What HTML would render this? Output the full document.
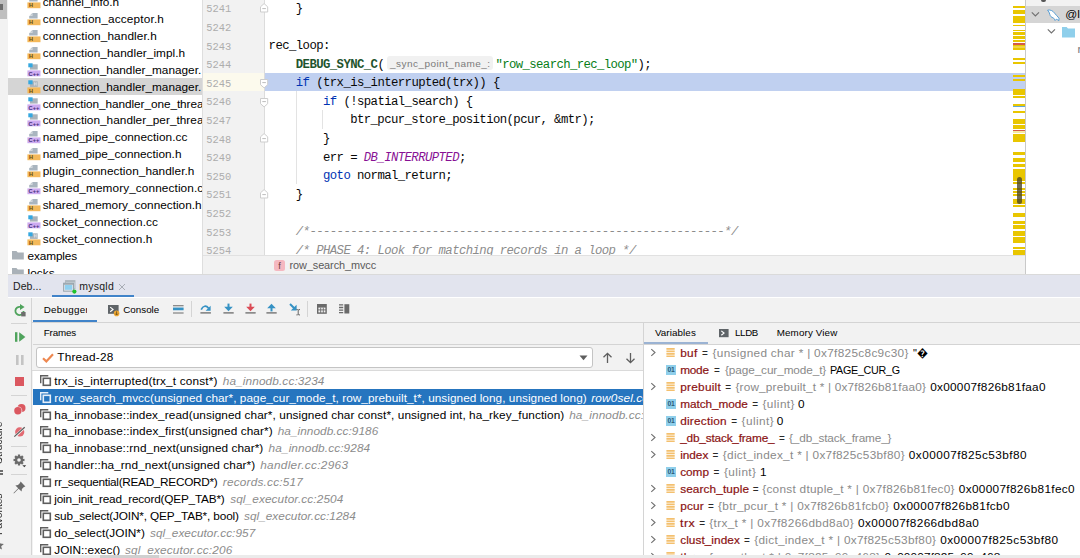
<!DOCTYPE html>
<html><head><meta charset="utf-8"><title>CLion debugger</title>
<style>
*{box-sizing:border-box;margin:0;padding:0}
html,body{width:1080px;height:558px;overflow:hidden;background:#fff}
body{position:relative;font-family:"Liberation Sans",sans-serif;font-size:11.8px;color:#000}
.a{position:absolute}
.t{position:absolute;white-space:pre;line-height:17px;height:17px}
.code{font-family:"Liberation Mono",monospace;font-size:12.3px;letter-spacing:-0.581px;white-space:pre;position:absolute;line-height:18.6px;height:18.6px;left:268.6px;color:#080808}
.ln{font-family:"Liberation Mono",monospace;font-size:10.4px;position:absolute;left:206.2px;line-height:18.6px;height:18.6px;color:#adadad}
.kw{color:#0033b3}.st{color:#067d17}.cm{color:#8c8c8c;font-style:italic}.mc{color:#1f542e;font-weight:bold}.cn{color:#871094;font-style:italic}
</style></head>
<body>
<div class="a" style="left:0;top:0;width:7.5px;height:558px;background:#f2f2f2"></div>
<div class="a" style="left:0;top:0;width:7px;height:19px;background:#bfbfbf"></div>
<div class="a" style="left:0;top:4.3px;width:3.2px;height:5.4px;background:#6e6e6e"></div>
<div class="a" style="left:7.5px;top:0;width:195px;height:273.8px;background:#fff;overflow:hidden">
<svg class="a" style="left:19.0px;top:-5.02px" width="14" height="14" viewBox="0 0 14 14"><path d="M5.3 1H10.6V6.5H2.2V4.1H5.3Z" fill="#a9b5bf"/><path d="M2.4 3.8L5 1.2V3.8Z" fill="#c5cdd3"/><path d="M0.4 7.4H13.5V13.2H0.4Z" fill="#f4b95a"/><text x="2" y="12.4" font-family="Liberation Sans,sans-serif" font-weight="bold" font-size="5.6" fill="#5e4a10">H</text></svg>
<div class="t" style="left:35.2px;top:-6.02px;letter-spacing:-0.019px;">channel_info.h</div>
<svg class="a" style="left:19.0px;top:11.90px" width="14" height="14" viewBox="0 0 14 14"><path d="M5.3 1H10.6V6.5H2.2V4.1H5.3Z" fill="#a9b5bf"/><path d="M2.4 3.8L5 1.2V3.8Z" fill="#c5cdd3"/><path d="M0.4 7.4H13.5V13.2H0.4Z" fill="#f4b95a"/><text x="2" y="12.4" font-family="Liberation Sans,sans-serif" font-weight="bold" font-size="5.6" fill="#5e4a10">H</text></svg>
<div class="t" style="left:35.2px;top:10.90px;letter-spacing:0.157px;">connection_acceptor.h</div>
<svg class="a" style="left:19.0px;top:28.82px" width="14" height="14" viewBox="0 0 14 14"><path d="M5.3 1H10.6V6.5H2.2V4.1H5.3Z" fill="#a9b5bf"/><path d="M2.4 3.8L5 1.2V3.8Z" fill="#c5cdd3"/><path d="M0.4 7.4H13.5V13.2H0.4Z" fill="#f4b95a"/><text x="2" y="12.4" font-family="Liberation Sans,sans-serif" font-weight="bold" font-size="5.6" fill="#5e4a10">H</text></svg>
<div class="t" style="left:35.2px;top:27.82px;letter-spacing:0.101px;">connection_handler.h</div>
<svg class="a" style="left:19.0px;top:45.74px" width="14" height="14" viewBox="0 0 14 14"><path d="M5.3 1H10.6V6.5H2.2V4.1H5.3Z" fill="#a9b5bf"/><path d="M2.4 3.8L5 1.2V3.8Z" fill="#c5cdd3"/><path d="M0.4 7.4H13.5V13.2H0.4Z" fill="#f4b95a"/><text x="2" y="12.4" font-family="Liberation Sans,sans-serif" font-weight="bold" font-size="5.6" fill="#5e4a10">H</text></svg>
<div class="t" style="left:35.2px;top:44.74px;letter-spacing:0.062px;">connection_handler_impl.h</div>
<svg class="a" style="left:19.0px;top:62.66px" width="14" height="14" viewBox="0 0 14 14"><path d="M2.9 1.3H10.7V6.6H2.9Z" fill="#aab3ba"/><path d="M1.3 0.3H5.6V4.3H1.3Z" fill="#35a8e0"/><path d="M0.4 7.4H13.5V13.3H0.4Z" fill="#cdaaf0"/><text x="1.6" y="12.6" font-family="Liberation Sans,sans-serif" font-weight="bold" font-size="5.4" fill="#43307a" textLength="10.6" lengthAdjust="spacingAndGlyphs">C++</text></svg>
<div class="t" style="left:35.2px;top:61.66px;letter-spacing:-0.009px;">connection_handler_manager.</div>
<div class="a" style="left:0;top:78.12px;width:195px;height:16.62px;background:#d5d5d5"></div>
<svg class="a" style="left:19.0px;top:79.58px" width="14" height="14" viewBox="0 0 14 14"><path d="M2.9 1.3H10.7V6.9H2.9Z" fill="#aab3ba"/><path d="M7.4 2.2V5.6M9.2 2.2V5.6M7.4 3.9H9.2" stroke="#e0e4e8" stroke-width="0.8" fill="none"/><path d="M1.3 0.3H5.6V4.3H1.3Z" fill="#35a8e0"/><path d="M0.4 7.4H13.5V13.3H0.4Z" fill="#f4b95a"/><text x="2" y="12.7" font-family="Liberation Sans,sans-serif" font-weight="bold" font-size="5.6" fill="#5e4a10">H</text></svg>
<div class="t" style="left:35.2px;top:78.58px;letter-spacing:-0.009px;">connection_handler_manager.</div>
<svg class="a" style="left:19.0px;top:96.50px" width="14" height="14" viewBox="0 0 14 14"><path d="M2.9 1.3H10.7V6.6H2.9Z" fill="#aab3ba"/><path d="M1.3 0.3H5.6V4.3H1.3Z" fill="#35a8e0"/><path d="M0.4 7.4H13.5V13.3H0.4Z" fill="#cdaaf0"/><text x="1.6" y="12.6" font-family="Liberation Sans,sans-serif" font-weight="bold" font-size="5.4" fill="#43307a" textLength="10.6" lengthAdjust="spacingAndGlyphs">C++</text></svg>
<div class="t" style="left:35.2px;top:95.50px;letter-spacing:-0.069px;">connection_handler_one_threa</div>
<svg class="a" style="left:19.0px;top:113.42px" width="14" height="14" viewBox="0 0 14 14"><path d="M2.9 1.3H10.7V6.6H2.9Z" fill="#aab3ba"/><path d="M1.3 0.3H5.6V4.3H1.3Z" fill="#35a8e0"/><path d="M0.4 7.4H13.5V13.3H0.4Z" fill="#cdaaf0"/><text x="1.6" y="12.6" font-family="Liberation Sans,sans-serif" font-weight="bold" font-size="5.4" fill="#43307a" textLength="10.6" lengthAdjust="spacingAndGlyphs">C++</text></svg>
<div class="t" style="left:35.2px;top:112.42px;letter-spacing:0.028px;">connection_handler_per_threa</div>
<svg class="a" style="left:19.0px;top:130.34px" width="14" height="14" viewBox="0 0 14 14"><path d="M5.3 1H10.6V6.5H2.2V4.1H5.3Z" fill="#a9b5bf"/><path d="M2.4 3.8L5 1.2V3.8Z" fill="#c5cdd3"/><path d="M0.4 7.4H13.5V13.2H0.4Z" fill="#cdaaf0"/><text x="1.6" y="12.3" font-family="Liberation Sans,sans-serif" font-weight="bold" font-size="5.4" fill="#43307a" textLength="10.6" lengthAdjust="spacingAndGlyphs">C++</text></svg>
<div class="t" style="left:35.2px;top:129.34px;letter-spacing:0.046px;">named_pipe_connection.cc</div>
<svg class="a" style="left:19.0px;top:147.26px" width="14" height="14" viewBox="0 0 14 14"><path d="M5.3 1H10.6V6.5H2.2V4.1H5.3Z" fill="#a9b5bf"/><path d="M2.4 3.8L5 1.2V3.8Z" fill="#c5cdd3"/><path d="M0.4 7.4H13.5V13.2H0.4Z" fill="#f4b95a"/><text x="2" y="12.4" font-family="Liberation Sans,sans-serif" font-weight="bold" font-size="5.6" fill="#5e4a10">H</text></svg>
<div class="t" style="left:35.2px;top:146.26px;letter-spacing:0.018px;">named_pipe_connection.h</div>
<svg class="a" style="left:19.0px;top:164.18px" width="14" height="14" viewBox="0 0 14 14"><path d="M5.3 1H10.6V6.5H2.2V4.1H5.3Z" fill="#a9b5bf"/><path d="M2.4 3.8L5 1.2V3.8Z" fill="#c5cdd3"/><path d="M0.4 7.4H13.5V13.2H0.4Z" fill="#f4b95a"/><text x="2" y="12.4" font-family="Liberation Sans,sans-serif" font-weight="bold" font-size="5.6" fill="#5e4a10">H</text></svg>
<div class="t" style="left:35.2px;top:163.18px;letter-spacing:0.057px;">plugin_connection_handler.h</div>
<svg class="a" style="left:19.0px;top:181.10px" width="14" height="14" viewBox="0 0 14 14"><path d="M5.3 1H10.6V6.5H2.2V4.1H5.3Z" fill="#a9b5bf"/><path d="M2.4 3.8L5 1.2V3.8Z" fill="#c5cdd3"/><path d="M0.4 7.4H13.5V13.2H0.4Z" fill="#cdaaf0"/><text x="1.6" y="12.3" font-family="Liberation Sans,sans-serif" font-weight="bold" font-size="5.4" fill="#43307a" textLength="10.6" lengthAdjust="spacingAndGlyphs">C++</text></svg>
<div class="t" style="left:35.2px;top:180.10px;letter-spacing:0.099px;">shared_memory_connection.c</div>
<svg class="a" style="left:19.0px;top:198.02px" width="14" height="14" viewBox="0 0 14 14"><path d="M5.3 1H10.6V6.5H2.2V4.1H5.3Z" fill="#a9b5bf"/><path d="M2.4 3.8L5 1.2V3.8Z" fill="#c5cdd3"/><path d="M0.4 7.4H13.5V13.2H0.4Z" fill="#f4b95a"/><text x="2" y="12.4" font-family="Liberation Sans,sans-serif" font-weight="bold" font-size="5.6" fill="#5e4a10">H</text></svg>
<div class="t" style="left:35.2px;top:197.02px;letter-spacing:0.008px;">shared_memory_connection.h</div>
<svg class="a" style="left:19.0px;top:214.94px" width="14" height="14" viewBox="0 0 14 14"><path d="M2.9 1.3H10.7V6.6H2.9Z" fill="#aab3ba"/><path d="M1.3 0.3H5.6V4.3H1.3Z" fill="#35a8e0"/><path d="M0.4 7.4H13.5V13.3H0.4Z" fill="#cdaaf0"/><text x="1.6" y="12.6" font-family="Liberation Sans,sans-serif" font-weight="bold" font-size="5.4" fill="#43307a" textLength="10.6" lengthAdjust="spacingAndGlyphs">C++</text></svg>
<div class="t" style="left:35.2px;top:213.94px;letter-spacing:0.132px;">socket_connection.cc</div>
<svg class="a" style="left:19.0px;top:231.86px" width="14" height="14" viewBox="0 0 14 14"><path d="M2.9 1.3H10.7V6.9H2.9Z" fill="#aab3ba"/><path d="M7.4 2.2V5.6M9.2 2.2V5.6M7.4 3.9H9.2" stroke="#e0e4e8" stroke-width="0.8" fill="none"/><path d="M1.3 0.3H5.6V4.3H1.3Z" fill="#35a8e0"/><path d="M0.4 7.4H13.5V13.3H0.4Z" fill="#f4b95a"/><text x="2" y="12.7" font-family="Liberation Sans,sans-serif" font-weight="bold" font-size="5.6" fill="#5e4a10">H</text></svg>
<div class="t" style="left:35.2px;top:230.86px;letter-spacing:0.119px;">socket_connection.h</div>
<svg class="a" style="left:4.5px;top:250.98px" width="12" height="9" viewBox="0 0 12 9"><path d="M0 0H4.4L5.8 1.5H11.8V8.6H0Z" fill="#a9b1b8"/></svg>
<div class="t" style="left:20.1px;top:247.78px;letter-spacing:-0.129px;">examples</div>
<svg class="a" style="left:4.5px;top:267.90px" width="12" height="9" viewBox="0 0 12 9"><path d="M0 0H4.4L5.8 1.5H11.8V8.6H0Z" fill="#a9b1b8"/></svg>
<div class="t" style="left:20.1px;top:264.70px;letter-spacing:0.027px;">locks</div>
</div>
<div class="a" style="left:202px;top:0;width:1.3px;height:273.8px;background:#dedede"></div>
<div class="a" style="left:203.3px;top:0;width:61.2px;height:255.3px;background:#f2f2f2"></div>
<div class="a" style="left:264px;top:0;width:1px;height:255.3px;background:#dcdcdc"></div>
<div class="a" style="left:203.3px;top:72.80px;width:61.2px;height:18.3px;background:#fcfaed"></div>
<div class="a" style="left:264.5px;top:72.80px;width:760.5px;height:18.3px;background:#c0d0f0"></div>
<div class="a" style="left:0;top:0;width:1025px;height:255.3px;overflow:hidden">
<div class="a" style="left:295.5px;top:91.40px;width:1px;height:93.00px;background:#e3e3e3"></div>
<div class="a" style="left:322px;top:110.00px;width:1px;height:18.60px;background:#e3e3e3"></div>
<div class="ln" style="top:0.40px">5241</div>
<div class="code" style="top:-0.30px">    }</div>
<div class="ln" style="top:19.00px">5242</div>
<div class="ln" style="top:37.60px">5243</div>
<div class="code" style="top:36.90px">rec_loop:</div>
<div class="ln" style="top:56.20px">5244</div>
<div class="code" style="top:55.50px">    <span class="mc">DEBUG_SYNC_C</span>(</div>
<div class="ln" style="top:74.80px">5245</div>
<div class="code" style="top:74.10px">    <span class="kw">if</span> (trx_is_interrupted(trx)) {</div>
<div class="ln" style="top:93.40px">5246</div>
<div class="code" style="top:92.70px">        <span class="kw">if</span> (!spatial_search) {</div>
<div class="ln" style="top:112.00px">5247</div>
<div class="code" style="top:111.30px">            btr_pcur_store_position(pcur, &amp;mtr);</div>
<div class="ln" style="top:130.60px">5248</div>
<div class="code" style="top:129.90px">        }</div>
<div class="ln" style="top:149.20px">5249</div>
<div class="code" style="top:148.50px">        err = <span class="cn">DB_INTERRUPTED</span>;</div>
<div class="ln" style="top:167.80px">5250</div>
<div class="code" style="top:167.10px">        <span class="kw">goto</span> normal_return;</div>
<div class="ln" style="top:186.40px">5251</div>
<div class="code" style="top:185.70px">    }</div>
<div class="ln" style="top:205.00px">5252</div>
<div class="ln" style="top:223.60px">5253</div>
<div class="code" style="top:222.90px">    <span class="cm">/*-------------------------------------------------------------*/</span></div>
<div class="ln" style="top:242.20px">5254</div>
<div class="code" style="top:241.50px">    <span class="cm">/* PHASE 4: Look for matching records in a loop */</span></div>
<div class="a" style="left:386.6px;top:56.40px;width:106.6px;height:13.8px;border-radius:3px;background:#f1f1f1"></div>
<div class="t" style="left:390.4px;top:55.40px;letter-spacing:0.450px;transform:scaleX(1.0197);transform-origin:0 0;font-size:9.8px;color:#7a7a7a;">_sync_point_name_:</div>
<div class="code" style="left:495.6px;letter-spacing:-0.625px;top:55.50px"><span class="st">"row_search_rec_loop"</span>);</div>
<svg class="a" style="left:260.3px;top:2.80px" width="9" height="10" viewBox="0 0 9 10"><path d="M0.5 9V3.8L4.1 0.6L7.7 3.8V9Z" fill="#fff" stroke="#cdcdcd" stroke-width="1"/><path d="M2.3 5.6H5.9" stroke="#bdbdbd" stroke-width="1"/></svg>
<svg class="a" style="left:260.3px;top:79.20px" width="9" height="10" viewBox="0 0 9 10"><path d="M0.5 0.5V5.7L4.1 8.9L7.7 5.7V0.5Z" fill="#fff" stroke="#cdcdcd" stroke-width="1"/><path d="M2.3 3.6H5.9" stroke="#bdbdbd" stroke-width="1"/></svg>
<svg class="a" style="left:260.3px;top:97.80px" width="9" height="10" viewBox="0 0 9 10"><path d="M0.5 0.5V5.7L4.1 8.9L7.7 5.7V0.5Z" fill="#fff" stroke="#cdcdcd" stroke-width="1"/><path d="M2.3 3.6H5.9" stroke="#bdbdbd" stroke-width="1"/></svg>
<svg class="a" style="left:260.3px;top:133.00px" width="9" height="10" viewBox="0 0 9 10"><path d="M0.5 9V3.8L4.1 0.6L7.7 3.8V9Z" fill="#fff" stroke="#cdcdcd" stroke-width="1"/><path d="M2.3 5.6H5.9" stroke="#bdbdbd" stroke-width="1"/></svg>
<svg class="a" style="left:260.3px;top:188.80px" width="9" height="10" viewBox="0 0 9 10"><path d="M0.5 9V3.8L4.1 0.6L7.7 3.8V9Z" fill="#fff" stroke="#cdcdcd" stroke-width="1"/><path d="M2.3 5.6H5.9" stroke="#bdbdbd" stroke-width="1"/></svg>
</div>
<div class="a" style="left:1013.2px;top:5.6px;width:11.6px;height:2.6px;background:#e9c600"></div>
<div class="a" style="left:1013.2px;top:10px;width:11.6px;height:4.0px;background:#e9c600"></div>
<div class="a" style="left:1013.2px;top:16px;width:11.6px;height:7.2px;background:#e9c600"></div>
<div class="a" style="left:1013.2px;top:24.5px;width:11.6px;height:1.6px;background:#e9c600"></div>
<div class="a" style="left:1013.2px;top:29.5px;width:11.6px;height:1.5px;background:#e9c600"></div>
<div class="a" style="left:1013.2px;top:32px;width:11.6px;height:3.1px;background:#e9c600"></div>
<div class="a" style="left:1013.2px;top:36.4px;width:11.6px;height:2.5px;background:#e9c600"></div>
<div class="a" style="left:1013.2px;top:39.9px;width:11.6px;height:2.1px;background:#e9c600"></div>
<div class="a" style="left:1013.2px;top:43px;width:11.6px;height:1.9px;background:#d35a48"></div>
<div class="a" style="left:1013.2px;top:44.9px;width:11.6px;height:1.4px;background:#e9c600"></div>
<div class="a" style="left:1013.2px;top:46.3px;width:11.6px;height:1.7px;background:#f0d545"></div>
<div class="a" style="left:1013.2px;top:48px;width:11.6px;height:1.9px;background:#e9c600"></div>
<div class="a" style="left:1013.2px;top:58px;width:11.6px;height:2.0px;background:#e9c600"></div>
<div class="a" style="left:1013.2px;top:62.4px;width:11.6px;height:1.8px;background:#e9c600"></div>
<div class="a" style="left:1013.2px;top:75px;width:11.6px;height:1.9px;background:#e9c600"></div>
<div class="a" style="left:1013.2px;top:79.4px;width:11.6px;height:1.9px;background:#e9c600"></div>
<div class="a" style="left:1013.2px;top:88.8px;width:11.6px;height:6.3px;background:#e9c600"></div>
<div class="a" style="left:1013.2px;top:96px;width:11.6px;height:1.9px;background:#e9c600"></div>
<div class="a" style="left:1013.2px;top:104.1px;width:11.6px;height:1.8px;background:#e9c600"></div>
<div class="a" style="left:1013.2px;top:105.9px;width:11.6px;height:0.9px;background:#5fa8d8"></div>
<div class="a" style="left:1013.2px;top:111px;width:11.6px;height:1.7px;background:#e9c600"></div>
<div class="a" style="left:1013.2px;top:118.7px;width:11.6px;height:5.3px;background:#e9c600"></div>
<div class="a" style="left:1013.2px;top:125.2px;width:11.6px;height:4.3px;background:#e9c600"></div>
<div class="a" style="left:1013.2px;top:129.5px;width:11.6px;height:1.8px;background:#d35a48"></div>
<div class="a" style="left:1013.2px;top:131.3px;width:11.6px;height:1.3px;background:#f6e9a0"></div>
<div class="a" style="left:1013.2px;top:133.5px;width:11.6px;height:8.8px;background:#e9c600"></div>
<div class="a" style="left:1013.2px;top:152.4px;width:11.6px;height:2.5px;background:#e9c600"></div>
<div class="a" style="left:1013.2px;top:157.9px;width:11.6px;height:3.7px;background:#e9c600"></div>
<div class="a" style="left:1013.2px;top:163.6px;width:11.6px;height:3.8px;background:#e9c600"></div>
<div class="a" style="left:1013.2px;top:169.2px;width:11.6px;height:11.6px;background:#e9c600"></div>
<div class="a" style="left:1013.2px;top:182px;width:11.6px;height:2.0px;background:#e9c600"></div>
<div class="a" style="left:1013.2px;top:187.7px;width:11.6px;height:1.9px;background:#e9c600"></div>
<div class="a" style="left:1013.2px;top:190.9px;width:11.6px;height:2.2px;background:#e9c600"></div>
<div class="a" style="left:1013.2px;top:194.1px;width:11.6px;height:1.9px;background:#e9c600"></div>
<div class="a" style="left:1013.2px;top:198.8px;width:11.6px;height:5.0px;background:#e9c600"></div>
<div class="a" style="left:1013.2px;top:205px;width:11.6px;height:2.3px;background:#e9c600"></div>
<div class="a" style="left:1013.2px;top:212.6px;width:11.6px;height:4.8px;background:#e9c600"></div>
<div class="a" style="left:1013.2px;top:221.1px;width:11.6px;height:2.5px;background:#e9c600"></div>
<div class="a" style="left:1013.2px;top:225.1px;width:11.6px;height:3.5px;background:#e9c600"></div>
<div class="a" style="left:1013.2px;top:231.2px;width:11.6px;height:4.6px;background:#e9c600"></div>
<div class="a" style="left:1013.2px;top:237px;width:11.6px;height:5.7px;background:#e9c600"></div>
<div class="a" style="left:1013.2px;top:247.1px;width:11.6px;height:1.9px;background:#e9c600"></div>
<div class="a" style="left:1013.2px;top:250px;width:11.6px;height:5.0px;background:#e9c600"></div>
<div class="a" style="left:1016.9px;top:176.8px;width:5.1px;height:27px;border-radius:2.6px;background:rgba(72,66,40,.78)"></div>
<div class="a" style="left:1025px;top:0;width:55px;height:275px;background:#fff"></div>
<div class="a" style="left:1025px;top:0;width:1px;height:275px;background:#c9c9c9"></div>
<div class="a" style="left:1026px;top:0;width:54px;height:5.5px;background:#f2f2f2"></div>
<div class="a" style="left:1041px;top:0;width:5px;height:2px;background:#555;border-radius:0 0 2px 2px"></div>
<div class="a" style="left:1026px;top:5.5px;width:54px;height:17.5px;background:#d5d5d5"></div>
<svg class="a" style="left:1031px;top:11px" width="9" height="7" viewBox="0 0 9 7"><path d="M0.8 1.4L4.4 5L8 1.4" fill="none" stroke="#707070" stroke-width="1.15"/></svg>
<svg class="a" style="left:1046.5px;top:8.5px" width="13" height="13" viewBox="0 0 13 13"><path d="M0.6 1.2C3 0.5 6 1.6 7.6 4.2C8.6 5.8 10.8 7.4 12 9.2L11.8 11.8C10.9 10.8 10 10.3 9.2 10.3C9 11 8.2 11.5 7.5 11.1C7.7 10.2 7.1 9.4 6.1 8.8C4.5 8.5 3.3 7.3 2.8 5.4C2.5 3.8 1.8 2.3 0.6 1.2Z" fill="#fff" stroke="#4a96d2" stroke-width="0.9" stroke-linejoin="round"/></svg>
<div class="t" style="left:1065.3px;top:6px">@lo</div>
<svg class="a" style="left:1046.6px;top:28.2px" width="9" height="7" viewBox="0 0 9 7"><path d="M0.8 1.4L4.4 5L8 1.4" fill="none" stroke="#707070" stroke-width="1.15"/></svg>
<svg class="a" style="left:1061.6px;top:26.6px" width="13" height="11" viewBox="0 0 13 11"><path d="M0 0H4.6L6 1.6H13V10.5H0Z" fill="#8fcfeb"/></svg>
<div class="t" style="left:1077.5px;top:41px;color:#777">n</div>
<div class="a" style="left:203.3px;top:255.3px;width:821.7px;height:18.5px;background:#f2f2f2;border-top:1px solid #e1e1e1"></div>
<div class="a" style="left:274px;top:259.5px;width:11px;height:11.5px;border-radius:2.5px;background:#f5b8c0"></div>
<div class="a" style="left:274px;top:259.5px;width:11px;height:11.5px;line-height:12.6px;text-align:center;font-size:9.2px;color:#6b3a40">f</div>
<div class="t" style="left:289.5px;top:256.80px;letter-spacing:-0.083px;font-size:10.9px;color:#5a5a5a;">row_search_mvcc</div>
<div class="a" style="left:7.5px;top:273.8px;width:1072.5px;height:23.7px;background:#e2e4ee;border-top:1.3px solid #dadada"></div>
<div class="t" style="left:13.0px;top:278.30px;letter-spacing:0.057px;font-size:10.5px;color:#1a1a1a;">Deb...</div>
<div class="a" style="left:52px;top:294.6px;width:81.5px;height:2.4px;background:#4083c9"></div>
<svg class="a" style="left:62.5px;top:280px" width="14" height="14" viewBox="0 0 14 14"><rect x="2.4" y="0.6" width="9.6" height="8" fill="#d3dae0" stroke="#aeb7be" stroke-width="0.9"/><rect x="2.4" y="0.6" width="9.6" height="1.6" fill="#aeb7be"/><rect x="0.6" y="3.2" width="9.9" height="8" fill="#dde4ea" stroke="#9aa5ad" stroke-width="1"/><rect x="0.6" y="3.2" width="9.9" height="1.5" fill="#9aa5ad"/><rect x="1.9" y="5" width="7.3" height="4.8" fill="#8fd0f0"/><circle cx="11.4" cy="11.6" r="2.1" fill="#1fc32b"/></svg>
<div class="t" style="left:79.2px;top:278.30px;letter-spacing:0.267px;font-size:10.5px;color:#1a1a1a;">mysqld</div>
<svg class="a" style="left:117.5px;top:283px" width="8" height="8" viewBox="0 0 8 8"><path d="M1 1L7 7M7 1L1 7" stroke="#a8adb5" stroke-width="1"/></svg>
<div class="a" style="left:7.5px;top:297.5px;width:1072.5px;height:260.5px;background:#f2f2f2"></div>
<div class="a" style="left:31px;top:297.5px;width:1px;height:260.5px;background:#d4d4d4"></div>
<div class="a" style="left:31.5px;top:321.5px;width:1048.5px;height:1px;background:#d4d4d4"></div>
<div class="a" style="left:32.5px;top:319.6px;width:64.5px;height:2.4px;background:#4083c9"></div>
<div class="a" style="left:40px;top:300px;width:46.9px;height:20px;overflow:hidden">
<div class="t" style="left:3.7px;top:1.20px;letter-spacing:0.281px;font-size:9.8px;">Debugger</div>
</div>
<svg class="a" style="left:107.5px;top:305.2px" width="12" height="12" viewBox="0 0 12 12"><rect x="0" y="0" width="10.6" height="8.8" fill="#5f6468"/><path d="M2.2 2.1L5 4.4L2.2 6.7" fill="none" stroke="#fff" stroke-width="1.2"/><circle cx="8.6" cy="8.4" r="2.8" fill="#f0a732"/><path d="M8.6 6.4V9.6M7.2 8.6L8.6 10L10 8.6" stroke="#5a4a1a" stroke-width="0.8" fill="none"/></svg>
<div class="t" style="left:123.3px;top:301.20px;letter-spacing:-0.009px;font-size:9.8px;">Console</div>
<svg class="a" style="left:172.5px;top:304px" width="11" height="11" viewBox="0 0 11 11"><path d="M0 1.7H10.6M0 9H10.6" stroke="#6a6a6a" stroke-width="1.1"/><path d="M0 4.9H10.6" stroke="#3592c4" stroke-width="2.7"/></svg>
<div class="a" style="left:191px;top:300.5px;width:1px;height:16px;background:#d4d4d4"></div>
<svg class="a" style="left:200px;top:303px" width="12" height="11" viewBox="0 0 12 11"><path d="M1.2 6.6C3 2.6 6.2 2.2 8.6 5.2" fill="none" stroke="#3592c4" stroke-width="1.7"/><path d="M10.6 2.8V7.8H5.6Z" fill="#3592c4"/><path d="M0.4 9.9H10.9" stroke="#6a6a6a" stroke-width="1.3"/></svg>
<svg class="a" style="left:222.5px;top:303px" width="12" height="11" viewBox="0 0 12 11"><path d="M5.5 0.6V5" stroke="#3592c4" stroke-width="2"/><path d="M1.2 3.8H9.8L5.5 8.2Z" fill="#3592c4"/><path d="M0.4 9.9H10.7" stroke="#6a6a6a" stroke-width="1.3"/></svg>
<svg class="a" style="left:244.5px;top:303px" width="12" height="11" viewBox="0 0 12 11"><path d="M5.5 0.6V5" stroke="#db4b55" stroke-width="2"/><path d="M1.2 3.8H9.8L5.5 8.2Z" fill="#db4b55"/><path d="M0.4 9.9H10.7" stroke="#6a6a6a" stroke-width="1.3"/></svg>
<svg class="a" style="left:266.3px;top:303px" width="12" height="11" viewBox="0 0 12 11"><path d="M5.5 4V8.4" stroke="#3592c4" stroke-width="2"/><path d="M1.2 5.2H9.8L5.5 0.8Z" fill="#3592c4"/><path d="M0.4 9.9H10.7" stroke="#6a6a6a" stroke-width="1.3"/></svg>
<svg class="a" style="left:288.5px;top:303px" width="13" height="13" viewBox="0 0 13 13"><path d="M1 1L5.5 5.5" stroke="#3592c4" stroke-width="2"/><path d="M7.6 1.8V7.6H1.8Z" fill="#3592c4"/><path d="M7.4 6.6H8.6L9.2 7.2L9.8 6.6H11M9.2 7.2V11.2M7.4 11.9H8.6L9.2 11.3L9.8 11.9H11" stroke="#555" stroke-width="0.9" fill="none"/></svg>
<div class="a" style="left:307.3px;top:300.5px;width:1px;height:16px;background:#d4d4d4"></div>
<svg class="a" style="left:317px;top:304px" width="10" height="10" viewBox="0 0 10 10"><rect x="0.7" y="0.7" width="8.4" height="8.4" fill="none" stroke="#6a6a6a" stroke-width="1.4"/><rect x="1" y="1" width="8" height="2.6" fill="#6a6a6a"/><path d="M1 5.9H9M3.7 3.6V9M6.3 3.6V9" stroke="#6a6a6a" stroke-width="0.9"/></svg>
<svg class="a" style="left:338.7px;top:304px" width="11" height="10" viewBox="0 0 11 10"><path d="M0 0.9H4.2M0 3.5H4.2M0 6.1H4.2M0 8.7H4.2" stroke="#6a6a6a" stroke-width="1.3"/><rect x="5.4" y="0.2" width="4.9" height="9.3" fill="#6a6a6a"/></svg>
<div class="a" style="left:32.5px;top:343.5px;width:611px;height:1px;background:#d4d4d4"></div>
<div class="t" style="left:43.7px;top:324.10px;letter-spacing:-0.144px;font-size:9.8px;">Frames</div>
<div class="a" style="left:35.5px;top:346.5px;width:557px;height:21.5px;background:#fff;border:1px solid #c4c4c4;border-radius:3px"></div>
<svg class="a" style="left:41.5px;top:352.5px" width="12" height="10" viewBox="0 0 12 10"><path d="M1 5.3L4.3 8.4L11 1.2" fill="none" stroke="#ee8850" stroke-width="2.2"/></svg>
<div class="t" style="left:57.3px;top:349.00px;letter-spacing:0.195px;font-size:11.8px;">Thread-28</div>
<svg class="a" style="left:579px;top:355px" width="9" height="6" viewBox="0 0 9 6"><path d="M0.5 0.5H8.5L4.5 5.2Z" fill="#5e5e5e"/></svg>
<svg class="a" style="left:602px;top:351.5px" width="11" height="12" viewBox="0 0 11 12"><path d="M5.5 11V1.5M1.5 5.3L5.5 1.3L9.5 5.3" fill="none" stroke="#5e5e5e" stroke-width="1.3"/></svg>
<svg class="a" style="left:624.5px;top:351.5px" width="11" height="12" viewBox="0 0 11 12"><path d="M5.5 1V10.5M1.5 6.7L5.5 10.7L9.5 6.7" fill="none" stroke="#5e5e5e" stroke-width="1.3"/></svg>
<div class="a" style="left:32px;top:369.6px;width:611px;height:1px;background:#dadada"></div>
<div class="a" style="left:32.5px;top:370.5px;width:610.5px;height:184.5px;background:#fff;overflow:hidden">
<svg class="a" style="left:7.6px;top:4.30px" width="12" height="12" viewBox="0 0 12 12"><path d="M0.7 8.3V0.7H8.3" fill="none" stroke="#5e5e5e" stroke-width="1.4"/><rect x="3.3" y="3.3" width="7" height="7" fill="none" stroke="#5e5e5e" stroke-width="1.6"/></svg>
<div class="t" style="left:21.8px;top:2.20px;letter-spacing:0.164px;color:#000;">trx_is_interrupted(trx_t const*)</div>
<div class="t" style="left:190.3px;top:2.20px;letter-spacing:0.118px;color:#8c8c8c;font-style:italic;">ha_innodb.cc:3234</div>
<div class="a" style="left:0;top:18.20px;width:611px;height:16.8px;background:#2675bf"></div>
<svg class="a" style="left:7.6px;top:21.22px" width="12" height="12" viewBox="0 0 12 12"><path d="M0.7 8.3V0.7H8.3" fill="none" stroke="#e6eef8" stroke-width="1.4"/><rect x="3.3" y="3.3" width="7" height="7" fill="none" stroke="#e6eef8" stroke-width="1.6"/></svg>
<div class="t" style="left:21.8px;top:19.12px;letter-spacing:0.041px;color:#fff;">row_search_mvcc(unsigned char*, page_cur_mode_t, row_prebuilt_t*, unsigned long, unsigned long)</div>
<div class="t" style="left:558.8px;top:19.12px;letter-spacing:0.139px;color:#fff;font-style:italic;">row0sel.cc:5245</div>
<svg class="a" style="left:7.6px;top:38.14px" width="12" height="12" viewBox="0 0 12 12"><path d="M0.7 8.3V0.7H8.3" fill="none" stroke="#5e5e5e" stroke-width="1.4"/><rect x="3.3" y="3.3" width="7" height="7" fill="none" stroke="#5e5e5e" stroke-width="1.6"/></svg>
<div class="t" style="left:21.8px;top:36.04px;letter-spacing:0.082px;color:#000;">ha_innobase::index_read(unsigned char*, unsigned char const*, unsigned int, ha_rkey_function)</div>
<div class="t" style="left:536.7px;top:36.04px;letter-spacing:0.118px;color:#8c8c8c;font-style:italic;">ha_innodb.cc:9015</div>
<svg class="a" style="left:7.6px;top:55.06px" width="12" height="12" viewBox="0 0 12 12"><path d="M0.7 8.3V0.7H8.3" fill="none" stroke="#5e5e5e" stroke-width="1.4"/><rect x="3.3" y="3.3" width="7" height="7" fill="none" stroke="#5e5e5e" stroke-width="1.6"/></svg>
<div class="t" style="left:21.8px;top:52.96px;letter-spacing:0.101px;color:#000;">ha_innobase::index_first(unsigned char*)</div>
<div class="t" style="left:245.2px;top:52.96px;letter-spacing:0.055px;color:#8c8c8c;font-style:italic;">ha_innodb.cc:9186</div>
<svg class="a" style="left:7.6px;top:71.98px" width="12" height="12" viewBox="0 0 12 12"><path d="M0.7 8.3V0.7H8.3" fill="none" stroke="#5e5e5e" stroke-width="1.4"/><rect x="3.3" y="3.3" width="7" height="7" fill="none" stroke="#5e5e5e" stroke-width="1.6"/></svg>
<div class="t" style="left:21.8px;top:69.88px;letter-spacing:0.067px;color:#000;">ha_innobase::rnd_next(unsigned char*)</div>
<div class="t" style="left:236.1px;top:69.88px;letter-spacing:0.118px;color:#8c8c8c;font-style:italic;">ha_innodb.cc:9284</div>
<svg class="a" style="left:7.6px;top:88.90px" width="12" height="12" viewBox="0 0 12 12"><path d="M0.7 8.3V0.7H8.3" fill="none" stroke="#5e5e5e" stroke-width="1.4"/><rect x="3.3" y="3.3" width="7" height="7" fill="none" stroke="#5e5e5e" stroke-width="1.6"/></svg>
<div class="t" style="left:21.8px;top:86.80px;letter-spacing:0.081px;color:#000;">handler::ha_rnd_next(unsigned char*)</div>
<div class="t" style="left:227.7px;top:86.80px;letter-spacing:0.306px;color:#8c8c8c;font-style:italic;">handler.cc:2963</div>
<svg class="a" style="left:7.6px;top:105.82px" width="12" height="12" viewBox="0 0 12 12"><path d="M0.7 8.3V0.7H8.3" fill="none" stroke="#5e5e5e" stroke-width="1.4"/><rect x="3.3" y="3.3" width="7" height="7" fill="none" stroke="#5e5e5e" stroke-width="1.6"/></svg>
<div class="t" style="left:21.8px;top:103.72px;letter-spacing:-0.297px;color:#000;">rr_sequential(READ_RECORD*)</div>
<div class="t" style="left:190.3px;top:103.72px;letter-spacing:0.202px;color:#8c8c8c;font-style:italic;">records.cc:517</div>
<svg class="a" style="left:7.6px;top:122.74px" width="12" height="12" viewBox="0 0 12 12"><path d="M0.7 8.3V0.7H8.3" fill="none" stroke="#5e5e5e" stroke-width="1.4"/><rect x="3.3" y="3.3" width="7" height="7" fill="none" stroke="#5e5e5e" stroke-width="1.6"/></svg>
<div class="t" style="left:21.8px;top:120.64px;letter-spacing:-0.189px;color:#000;">join_init_read_record(QEP_TAB*)</div>
<div class="t" style="left:197.7px;top:120.64px;letter-spacing:0.108px;color:#8c8c8c;font-style:italic;">sql_executor.cc:2504</div>
<svg class="a" style="left:7.6px;top:139.66px" width="12" height="12" viewBox="0 0 12 12"><path d="M0.7 8.3V0.7H8.3" fill="none" stroke="#5e5e5e" stroke-width="1.4"/><rect x="3.3" y="3.3" width="7" height="7" fill="none" stroke="#5e5e5e" stroke-width="1.6"/></svg>
<div class="t" style="left:21.8px;top:137.56px;letter-spacing:-0.143px;color:#000;">sub_select(JOIN*, QEP_TAB*, bool)</div>
<div class="t" style="left:211.5px;top:137.56px;letter-spacing:0.034px;color:#8c8c8c;font-style:italic;">sql_executor.cc:1284</div>
<svg class="a" style="left:7.6px;top:156.58px" width="12" height="12" viewBox="0 0 12 12"><path d="M0.7 8.3V0.7H8.3" fill="none" stroke="#5e5e5e" stroke-width="1.4"/><rect x="3.3" y="3.3" width="7" height="7" fill="none" stroke="#5e5e5e" stroke-width="1.6"/></svg>
<div class="t" style="left:21.8px;top:154.48px;letter-spacing:0.051px;color:#000;">do_select(JOIN*)</div>
<div class="t" style="left:117.5px;top:154.48px;letter-spacing:0.040px;color:#8c8c8c;font-style:italic;">sql_executor.cc:957</div>
<svg class="a" style="left:7.6px;top:173.50px" width="12" height="12" viewBox="0 0 12 12"><path d="M0.7 8.3V0.7H8.3" fill="none" stroke="#5e5e5e" stroke-width="1.4"/><rect x="3.3" y="3.3" width="7" height="7" fill="none" stroke="#5e5e5e" stroke-width="1.6"/></svg>
<div class="t" style="left:21.8px;top:171.40px;letter-spacing:-0.018px;color:#000;">JOIN::exec()</div>
<div class="t" style="left:92.5px;top:171.40px;letter-spacing:0.151px;color:#8c8c8c;font-style:italic;">sql_executor.cc:206</div>
</div>
<div class="a" style="left:643px;top:322.5px;width:1px;height:235.5px;background:#d4d4d4"></div>
<div class="a" style="left:644px;top:343.5px;width:436px;height:1px;background:#d4d4d4"></div>
<div class="a" style="left:644px;top:342.4px;width:64px;height:1.6px;background:#9bb3d3"></div>
<div class="t" style="left:654.9px;top:324.30px;letter-spacing:0.097px;font-size:9.8px;">Variables</div>
<svg class="a" style="left:719.3px;top:328.7px" width="10" height="9" viewBox="0 0 10 9"><rect width="9.6" height="8.2" fill="#5f6468"/><path d="M2.3 1.9L5 4.1L2.3 6.3" fill="none" stroke="#fff" stroke-width="1.2"/></svg>
<div class="t" style="left:734.9px;top:324.30px;letter-spacing:-0.300px;transform:scaleX(0.9866);transform-origin:0 0;font-size:9.8px;">LLDB</div>
<div class="t" style="left:776.7px;top:324.30px;letter-spacing:0.143px;font-size:9.8px;">Memory View</div>
<div class="a" style="left:644px;top:344.5px;width:436px;height:210.5px;background:#fff;overflow:hidden">
<svg class="a" style="left:6.3px;top:3.40px" width="7" height="9" viewBox="0 0 7 9"><path d="M1.3 1.2L5 4.5L1.3 7.8" fill="none" stroke="#707070" stroke-width="1.1"/></svg>
<svg class="a" style="left:22.3px;top:3.80px" width="10" height="10" viewBox="0 0 10 10"><path d="M0.4 0.9H8.7M0.4 3.35H8.7M0.4 5.8H8.7M0.4 8.25H8.7" stroke="#f4c06e" stroke-width="1.7"/></svg>
<div class="t" style="left:36.2px;top:0.30px;letter-spacing:0.297px;color:#8a1212;-webkit-text-stroke:0.2px #8a1212;">buf</div>
<div class="t" style="left:58.0px;top:0.50px;font-size:10px;color:#2a2a2a">=</div>
<div class="t" style="left:68.6px;top:0.30px;letter-spacing:0.315px;color:#8a8a8a;">{unsigned char * | 0x7f825c8c9c30}</div>
<div class="t" style="left:268.5px;top:0.30px;letter-spacing:-0.300px;transform:scaleX(0.9306);transform-origin:0 0;">"�</div>
<div class="a" style="left:22.2px;top:20.60px;width:9.6px;height:9.7px;background:#8fcfeb;font-size:6.8px;line-height:9.7px;text-align:center;color:#2b5a78;font-weight:bold;letter-spacing:-0.3px">01</div>
<div class="t" style="left:36.2px;top:17.30px;letter-spacing:-0.239px;color:#8a1212;-webkit-text-stroke:0.2px #8a1212;">mode</div>
<div class="t" style="left:70.1px;top:17.50px;font-size:10px;color:#2a2a2a">=</div>
<div class="t" style="left:81.0px;top:17.30px;letter-spacing:-0.105px;color:#8a8a8a;">{page_cur_mode_t}</div>
<div class="t" style="left:186.2px;top:17.30px;letter-spacing:-0.300px;transform:scaleX(0.9083);transform-origin:0 0;">PAGE_CUR_G</div>
<svg class="a" style="left:6.3px;top:37.40px" width="7" height="9" viewBox="0 0 7 9"><path d="M1.3 1.2L5 4.5L1.3 7.8" fill="none" stroke="#707070" stroke-width="1.1"/></svg>
<svg class="a" style="left:22.3px;top:37.80px" width="10" height="10" viewBox="0 0 10 10"><path d="M0.4 0.9H8.7M0.4 3.35H8.7M0.4 5.8H8.7M0.4 8.25H8.7" stroke="#f4c06e" stroke-width="1.7"/></svg>
<div class="t" style="left:36.2px;top:34.30px;letter-spacing:0.271px;color:#8a1212;-webkit-text-stroke:0.2px #8a1212;">prebuilt</div>
<div class="t" style="left:81.2px;top:34.50px;font-size:10px;color:#2a2a2a">=</div>
<div class="t" style="left:91.4px;top:34.30px;letter-spacing:0.191px;color:#8a8a8a;">{row_prebuilt_t * | 0x7f826b81faa0}</div>
<div class="t" style="left:286.2px;top:34.30px;letter-spacing:0.260px;">0x00007f826b81faa0</div>
<div class="a" style="left:22.2px;top:54.60px;width:9.6px;height:9.7px;background:#8fcfeb;font-size:6.8px;line-height:9.7px;text-align:center;color:#2b5a78;font-weight:bold;letter-spacing:-0.3px">01</div>
<div class="t" style="left:36.2px;top:51.30px;letter-spacing:-0.056px;color:#8a1212;-webkit-text-stroke:0.2px #8a1212;">match_mode</div>
<div class="t" style="left:108.3px;top:51.50px;font-size:10px;color:#2a2a2a">=</div>
<div class="t" style="left:118.5px;top:51.30px;letter-spacing:0.411px;color:#8a8a8a;">{ulint}</div>
<div class="t" style="left:154.1px;top:51.30px;">0</div>
<div class="a" style="left:22.2px;top:71.60px;width:9.6px;height:9.7px;background:#8fcfeb;font-size:6.8px;line-height:9.7px;text-align:center;color:#2b5a78;font-weight:bold;letter-spacing:-0.3px">01</div>
<div class="t" style="left:36.2px;top:68.30px;letter-spacing:0.226px;color:#8a1212;-webkit-text-stroke:0.2px #8a1212;">direction</div>
<div class="t" style="left:87.2px;top:68.50px;font-size:10px;color:#2a2a2a">=</div>
<div class="t" style="left:97.6px;top:68.30px;letter-spacing:0.411px;color:#8a8a8a;">{ulint}</div>
<div class="t" style="left:132.8px;top:68.30px;">0</div>
<svg class="a" style="left:6.3px;top:88.40px" width="7" height="9" viewBox="0 0 7 9"><path d="M1.3 1.2L5 4.5L1.3 7.8" fill="none" stroke="#707070" stroke-width="1.1"/></svg>
<svg class="a" style="left:22.3px;top:88.80px" width="10" height="10" viewBox="0 0 10 10"><path d="M0.4 0.9H8.7M0.4 3.35H8.7M0.4 5.8H8.7M0.4 8.25H8.7" stroke="#f4c06e" stroke-width="1.7"/></svg>
<div class="t" style="left:36.2px;top:85.30px;letter-spacing:-0.178px;color:#8a1212;-webkit-text-stroke:0.2px #8a1212;">_db_stack_frame_</div>
<div class="t" style="left:134.9px;top:85.50px;font-size:10px;color:#2a2a2a">=</div>
<div class="t" style="left:145.0px;top:85.30px;letter-spacing:-0.143px;color:#8a8a8a;">{_db_stack_frame_}</div>
<svg class="a" style="left:6.3px;top:105.40px" width="7" height="9" viewBox="0 0 7 9"><path d="M1.3 1.2L5 4.5L1.3 7.8" fill="none" stroke="#707070" stroke-width="1.1"/></svg>
<svg class="a" style="left:22.3px;top:105.80px" width="10" height="10" viewBox="0 0 10 10"><path d="M0.4 0.9H8.7M0.4 3.35H8.7M0.4 5.8H8.7M0.4 8.25H8.7" stroke="#f4c06e" stroke-width="1.7"/></svg>
<div class="t" style="left:36.2px;top:102.30px;letter-spacing:-0.026px;color:#8a1212;-webkit-text-stroke:0.2px #8a1212;">index</div>
<div class="t" style="left:68.6px;top:102.50px;font-size:10px;color:#2a2a2a">=</div>
<div class="t" style="left:78.8px;top:102.30px;letter-spacing:0.297px;color:#8a8a8a;">{dict_index_t * | 0x7f825c53bf80}</div>
<div class="t" style="left:264.8px;top:102.30px;letter-spacing:0.446px;">0x00007f825c53bf80</div>
<div class="a" style="left:22.2px;top:122.60px;width:9.6px;height:9.7px;background:#8fcfeb;font-size:6.8px;line-height:9.7px;text-align:center;color:#2b5a78;font-weight:bold;letter-spacing:-0.3px">01</div>
<div class="t" style="left:36.2px;top:119.30px;letter-spacing:-0.020px;color:#8a1212;-webkit-text-stroke:0.2px #8a1212;">comp</div>
<div class="t" style="left:69.6px;top:119.50px;font-size:10px;color:#2a2a2a">=</div>
<div class="t" style="left:80.0px;top:119.30px;letter-spacing:0.411px;color:#8a8a8a;">{ulint}</div>
<div class="t" style="left:115.9px;top:119.30px;">1</div>
<svg class="a" style="left:6.3px;top:139.40px" width="7" height="9" viewBox="0 0 7 9"><path d="M1.3 1.2L5 4.5L1.3 7.8" fill="none" stroke="#707070" stroke-width="1.1"/></svg>
<svg class="a" style="left:22.3px;top:139.80px" width="10" height="10" viewBox="0 0 10 10"><path d="M0.4 0.9H8.7M0.4 3.35H8.7M0.4 5.8H8.7M0.4 8.25H8.7" stroke="#f4c06e" stroke-width="1.7"/></svg>
<div class="t" style="left:36.2px;top:136.30px;letter-spacing:0.112px;color:#8a1212;-webkit-text-stroke:0.2px #8a1212;">search_tuple</div>
<div class="t" style="left:108.7px;top:136.50px;font-size:10px;color:#2a2a2a">=</div>
<div class="t" style="left:118.2px;top:136.30px;letter-spacing:0.282px;color:#8a8a8a;">{const dtuple_t * | 0x7f826b81fec0}</div>
<div class="t" style="left:314.8px;top:136.30px;letter-spacing:0.328px;">0x00007f826b81fec0</div>
<svg class="a" style="left:6.3px;top:156.40px" width="7" height="9" viewBox="0 0 7 9"><path d="M1.3 1.2L5 4.5L1.3 7.8" fill="none" stroke="#707070" stroke-width="1.1"/></svg>
<svg class="a" style="left:22.3px;top:156.80px" width="10" height="10" viewBox="0 0 10 10"><path d="M0.4 0.9H8.7M0.4 3.35H8.7M0.4 5.8H8.7M0.4 8.25H8.7" stroke="#f4c06e" stroke-width="1.7"/></svg>
<div class="t" style="left:36.2px;top:153.30px;letter-spacing:0.149px;color:#8a1212;-webkit-text-stroke:0.2px #8a1212;">pcur</div>
<div class="t" style="left:64.0px;top:153.50px;font-size:10px;color:#2a2a2a">=</div>
<div class="t" style="left:74.1px;top:153.30px;letter-spacing:0.282px;color:#8a8a8a;">{btr_pcur_t * | 0x7f826b81fcb0}</div>
<div class="t" style="left:249.3px;top:153.30px;letter-spacing:0.352px;">0x00007f826b81fcb0</div>
<svg class="a" style="left:6.3px;top:173.40px" width="7" height="9" viewBox="0 0 7 9"><path d="M1.3 1.2L5 4.5L1.3 7.8" fill="none" stroke="#707070" stroke-width="1.1"/></svg>
<svg class="a" style="left:22.3px;top:173.80px" width="10" height="10" viewBox="0 0 10 10"><path d="M0.4 0.9H8.7M0.4 3.35H8.7M0.4 5.8H8.7M0.4 8.25H8.7" stroke="#f4c06e" stroke-width="1.7"/></svg>
<div class="t" style="left:36.2px;top:170.30px;letter-spacing:0.450px;transform:scaleX(1.0493);transform-origin:0 0;color:#8a1212;-webkit-text-stroke:0.2px #8a1212;">trx</div>
<div class="t" style="left:55.2px;top:170.50px;font-size:10px;color:#2a2a2a">=</div>
<div class="t" style="left:65.3px;top:170.30px;letter-spacing:0.327px;color:#8a8a8a;">{trx_t * | 0x7f8266dbd8a0}</div>
<div class="t" style="left:214.1px;top:170.30px;letter-spacing:0.391px;">0x00007f8266dbd8a0</div>
<svg class="a" style="left:6.3px;top:190.40px" width="7" height="9" viewBox="0 0 7 9"><path d="M1.3 1.2L5 4.5L1.3 7.8" fill="none" stroke="#707070" stroke-width="1.1"/></svg>
<svg class="a" style="left:22.3px;top:190.80px" width="10" height="10" viewBox="0 0 10 10"><path d="M0.4 0.9H8.7M0.4 3.35H8.7M0.4 5.8H8.7M0.4 8.25H8.7" stroke="#f4c06e" stroke-width="1.7"/></svg>
<div class="t" style="left:36.2px;top:187.30px;letter-spacing:0.057px;color:#8a1212;-webkit-text-stroke:0.2px #8a1212;">clust_index</div>
<div class="t" style="left:100.1px;top:187.50px;font-size:10px;color:#2a2a2a">=</div>
<div class="t" style="left:110.2px;top:187.30px;letter-spacing:0.297px;color:#8a8a8a;">{dict_index_t * | 0x7f825c53bf80}</div>
<div class="t" style="left:296.2px;top:187.30px;letter-spacing:0.446px;">0x00007f825c53bf80</div>
<svg class="a" style="left:6.3px;top:207.40px" width="7" height="9" viewBox="0 0 7 9"><path d="M1.3 1.2L5 4.5L1.3 7.8" fill="none" stroke="#707070" stroke-width="1.1"/></svg>
<svg class="a" style="left:22.3px;top:207.80px" width="10" height="10" viewBox="0 0 10 10"><path d="M0.4 0.9H8.7M0.4 3.35H8.7M0.4 5.8H8.7M0.4 8.25H8.7" stroke="#f4c06e" stroke-width="1.7"/></svg>
<div class="t" style="left:36.2px;top:204.30px;letter-spacing:0.259px;color:#8a1212;-webkit-text-stroke:0.2px #8a1212;">thr</div>
<div class="t" style="left:54.9px;top:204.50px;font-size:10px;color:#2a2a2a">=</div>
<div class="t" style="left:65.0px;top:204.30px;letter-spacing:0.294px;color:#8a8a8a;">{que_thr_t * | 0x7f825c99e468}</div>
<div class="t" style="left:240.4px;top:204.30px;letter-spacing:0.141px;">0x00007f825c99e468</div>
</div>
<div class="a" style="left:0;top:554.7px;width:1080px;height:3.3px;background:#ebebeb"></div>
<div class="a" style="left:100px;top:554.7px;width:59px;height:3.3px;background:#d0d0d0"></div>
<svg class="a" style="left:13.8px;top:303.5px" width="13" height="13" viewBox="0 0 13 13"><path d="M9.6 7A4.1 4.1 0 1 1 6 2.9" fill="none" stroke="#4fa35c" stroke-width="1.8"/><path d="M6 0L10.6 3L6 6Z" fill="#4fa35c"/><rect x="7.2" y="8" width="4.4" height="4.4" fill="#6e6e6e"/></svg>
<div class="a" style="left:11.2px;top:323px;width:16px;height:1px;background:#d4d4d4"></div>
<svg class="a" style="left:15px;top:332.3px" width="11" height="10" viewBox="0 0 11 10"><rect x="0" y="0.2" width="2.4" height="9.6" fill="#4fa35c"/><path d="M4.2 0.2L10.4 5L4.2 9.8Z" fill="#4fa35c"/></svg>
<svg class="a" style="left:16px;top:354.5px" width="8" height="10" viewBox="0 0 8 10"><rect x="0" y="0" width="2.6" height="10" fill="#c4c4c4"/><rect x="5" y="0" width="2.6" height="10" fill="#c4c4c4"/></svg>
<div class="a" style="left:15.3px;top:377px;width:9px;height:9px;background:#db5860"></div>
<div class="a" style="left:11.2px;top:395.4px;width:16px;height:1px;background:#d4d4d4"></div>
<svg class="a" style="left:13px;top:403px" width="14" height="14" viewBox="0 0 14 14"><circle cx="8.5" cy="4.9" r="4" fill="#db5860"/><circle cx="4.9" cy="7.8" r="4.4" fill="#f2f2f2"/><circle cx="4.9" cy="7.8" r="3.7" fill="#db5860"/></svg>
<svg class="a" style="left:13px;top:425px" width="14" height="14" viewBox="0 0 14 14"><circle cx="6.7" cy="6.9" r="4.6" fill="#e26a72"/><path d="M1.6 11.9L11.9 2.1" stroke="#f2f2f2" stroke-width="2.6"/><path d="M1.3 11.6L11.7 2.3" stroke="#5a5a5a" stroke-width="1.2"/></svg>
<div class="a" style="left:11.2px;top:445.6px;width:16px;height:1px;background:#d4d4d4"></div>
<svg class="a" style="left:13.4px;top:453.5px" width="14" height="14" viewBox="0 0 14 14"><g transform="translate(6 6)" fill="#6a6a6a"><path fill-rule="evenodd" d="M0 -4.1A4.1 4.1 0 1 0 0 4.1A4.1 4.1 0 1 0 0 -4.1ZM0 -1.8A1.8 1.8 0 1 1 0 1.8A1.8 1.8 0 1 1 0 -1.8Z"/><rect x="-1.15" y="-5.5" width="2.3" height="2.6" transform="rotate(0)"/><rect x="-1.15" y="-5.5" width="2.3" height="2.6" transform="rotate(45)"/><rect x="-1.15" y="-5.5" width="2.3" height="2.6" transform="rotate(90)"/><rect x="-1.15" y="-5.5" width="2.3" height="2.6" transform="rotate(135)"/><rect x="-1.15" y="-5.5" width="2.3" height="2.6" transform="rotate(180)"/><rect x="-1.15" y="-5.5" width="2.3" height="2.6" transform="rotate(225)"/><rect x="-1.15" y="-5.5" width="2.3" height="2.6" transform="rotate(270)"/><rect x="-1.15" y="-5.5" width="2.3" height="2.6" transform="rotate(315)"/></g><path d="M9.4 11.2H13.2L11.3 13.3Z" fill="#3a3a3a"/></svg>
<div class="a" style="left:11.2px;top:473.9px;width:16px;height:1px;background:#d4d4d4"></div>
<svg class="a" style="left:13px;top:481px" width="13" height="13" viewBox="0 0 13 13"><path d="M7.6 0.6L12.4 5.4L10.9 6L8.9 8L8.6 10.6L5.6 7.7L0.9 12.4L0.5 12L5.2 7.3L2.4 4.4L5 4.1L7 2.1Z" fill="#6a6a6a"/></svg>
<div class="a" style="left:-6.7px;top:464px;transform:rotate(-90deg);transform-origin:0 0;will-change:transform;font-size:10.4px;color:#2a2a2a;white-space:pre;line-height:12px;height:12px;letter-spacing:0.06px">Structure</div>
<div class="a" style="left:-6.7px;top:534.7px;transform:rotate(-90deg);transform-origin:0 0;will-change:transform;font-size:10.4px;color:#2a2a2a;white-space:pre;line-height:12px;height:12px;letter-spacing:-0.15px">Favorites</div>
<div class="a" style="left:0;top:469.6px;width:2.6px;height:2.4px;background:#6e6e6e"></div>
<div class="a" style="left:0;top:473px;width:2.6px;height:2.4px;background:#6e6e6e"></div>
<svg class="a" style="left:-6.4px;top:539.5px" width="10" height="10" viewBox="0 0 10 10"><path d="M5 0.3L6.4 3.6L9.9 3.9L7.2 6.2L8 9.6L5 7.8L2 9.6L2.8 6.2L0.1 3.9L3.6 3.6Z" fill="#6e6e6e"/></svg>
</body></html>
